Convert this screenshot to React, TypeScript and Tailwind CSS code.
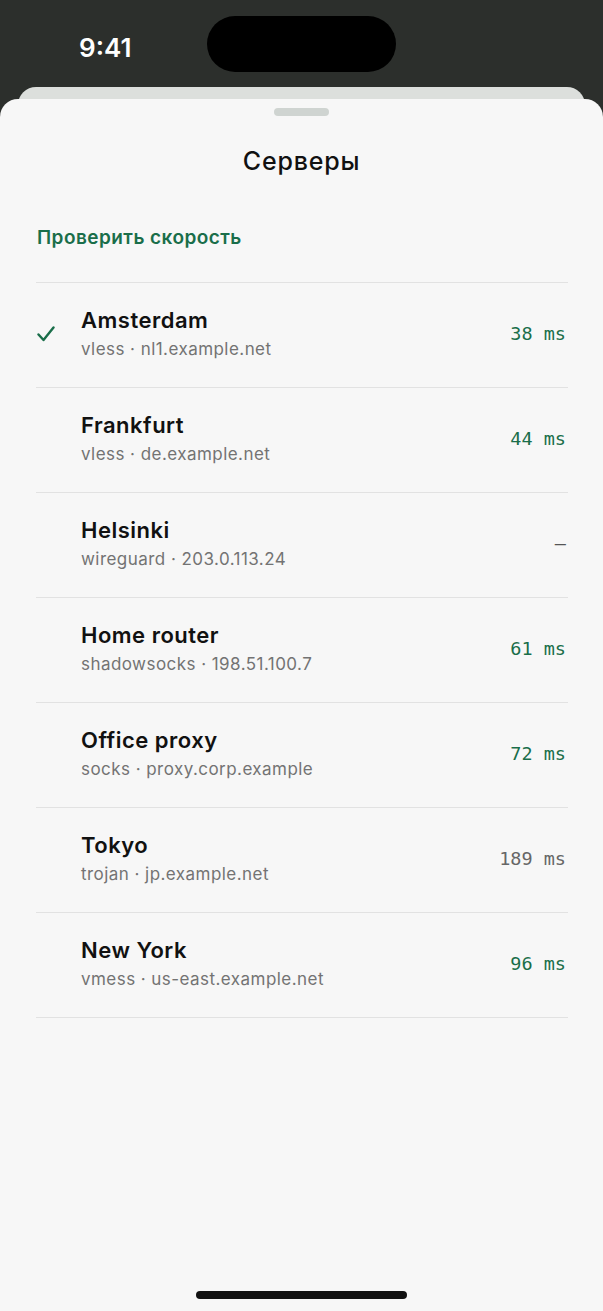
import React from "react";

type Server = { name: string; sub: string; ms: string; tone: "green" | "gray" | "none"; active?: boolean };

const servers: Server[] = [
  { name: "Amsterdam", sub: "vless · nl1.example.net", ms: "38 ms", tone: "green", active: true },
  { name: "Frankfurt", sub: "vless · de.example.net", ms: "44 ms", tone: "green" },
  { name: "Helsinki", sub: "wireguard · 203.0.113.24", ms: "—", tone: "none" },
  { name: "Home router", sub: "shadowsocks · 198.51.100.7", ms: "61 ms", tone: "green" },
  { name: "Office proxy", sub: "socks · proxy.corp.example", ms: "72 ms", tone: "green" },
  { name: "Tokyo", sub: "trojan · jp.example.net", ms: "189 ms", tone: "gray" },
  { name: "New York", sub: "vmess · us-east.example.net", ms: "96 ms", tone: "green" },
];

export default function App() {
  return (
    <div className="w-[603px] h-[1311px] bg-[#2c2f2c] flex flex-col overflow-hidden font-['Inter',sans-serif]">
      {/* status bar */}
      <div className="h-[87px] flex items-start pt-[16px]">
        <div className="h-[56px] pt-[6px] flex items-center ml-[79px] w-[56px] text-white text-[26px] font-semibold tracking-[0px]">
          9:41
        </div>
        <div className="ml-[72px] w-[189px] h-[56px] rounded-full bg-black" />
      </div>
      {/* back sheet */}
      <div className="mx-[18px] h-[20px] rounded-t-[18px] bg-[#dcdfdc]" />
      {/* front sheet */}
      <div className="-mt-[8px] flex-1 rounded-t-[18px] bg-[#f7f7f7] flex flex-col">
        <div className="mt-[9px] mx-auto w-[55px] h-[8px] rounded-full bg-[#cfd4d1]" />
        <div className="mt-[29px] text-center text-[25px] leading-[32px] font-medium tracking-[0.8px] text-[#111]">Серверы</div>
        <div className="mt-[47px] px-[37px] text-[19px] leading-[28px] font-semibold tracking-[0.45px] text-[#1a6e4a]">
          Проверить скорость
        </div>
        <div className="mt-[30px] ml-[36px] mr-[35px] border-t border-[#e2e2e2]">
          {servers.map((s) => (
            <div key={s.name} className="h-[105px] flex items-center border-b border-[#e2e2e2]">
              <div className="w-[45px] flex items-center pl-[1px] pb-[2px]">
                {s.active && (
                  <svg width="18" height="16" viewBox="0 0 18 16" fill="none">
                    <path d="M1.5 8.5 L6.5 14 L16.5 1.5" stroke="#1a6e4a" strokeWidth="2.4" strokeLinecap="round" strokeLinejoin="round" />
                  </svg>
                )}
              </div>
              <div className="flex-1 flex flex-col pb-[3px]">
                <div className="text-[22px] leading-[28px] font-semibold tracking-[0.5px] text-[#111]">{s.name}</div>
                <div className="mt-[3px] text-[17px] leading-[24px] tracking-[0.45px] text-[#737373]">{s.sub}</div>
              </div>
              <div
                className={
                  "pr-[2px] pb-[3px] font-['DejaVu_Sans_Mono',monospace] text-[18.5px] " +
                  (s.tone === "green" ? "text-[#1a6e4a]" : s.tone === "gray" ? "text-[#666]" : "text-[#555]")
                }
              >
                {s.ms}
              </div>
            </div>
          ))}
        </div>
        <div className="flex-1" />
        <div className="mb-[12px] mx-auto w-[211px] h-[8px] rounded-full bg-[#111]" />
      </div>
    </div>
  );
}
